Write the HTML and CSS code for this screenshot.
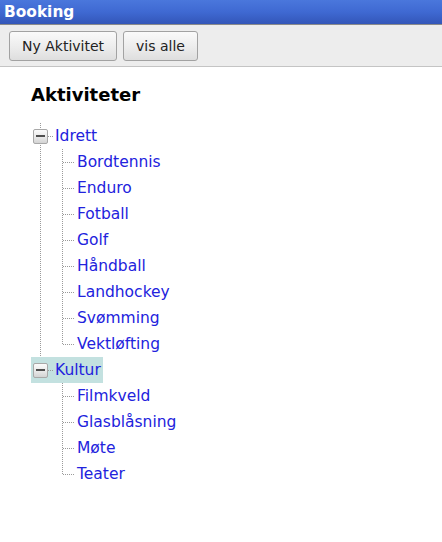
FILE: index.html
```html
<!DOCTYPE html>
<html>
<head>
<meta charset="utf-8">
<title>Booking</title>
<link rel="stylesheet" href="styles.css">
</head>
<body>
<div class="titlebar">Booking</div>
<div class="toolbar">
  <button class="btn">Ny Aktivitet</button>
  <button class="btn">vis alle</button>
</div>
<main class="content">
  <h1 class="heading">Aktiviteter</h1>
  <ul class="tree">
    <li class="branch">
      <div class="node-row"><span class="toggle"><span class="minus"></span></span><a class="label">Idrett</a></div>
      <ul class="children">
        <li class="leaf"><a class="label">Bordtennis</a></li>
        <li class="leaf"><a class="label">Enduro</a></li>
        <li class="leaf"><a class="label">Fotball</a></li>
        <li class="leaf"><a class="label">Golf</a></li>
        <li class="leaf"><a class="label">Håndball</a></li>
        <li class="leaf"><a class="label">Landhockey</a></li>
        <li class="leaf"><a class="label">Svømming</a></li>
        <li class="leaf"><a class="label">Vektløfting</a></li>
      </ul>
    </li>
    <li class="branch">
      <div class="node-row selected"><span class="toggle"><span class="minus"></span></span><a class="label">Kultur</a></div>
      <ul class="children">
        <li class="leaf"><a class="label">Filmkveld</a></li>
        <li class="leaf"><a class="label">Glasblåsning</a></li>
        <li class="leaf"><a class="label">Møte</a></li>
        <li class="leaf"><a class="label">Teater</a></li>
      </ul>
    </li>
  </ul>
</main>
</body>
</html>
```
FILE: styles.css
```css
html, body {
  margin: 0;
  padding: 0;
  background: #ffffff;
  font-family: "DejaVu Sans", Verdana, sans-serif;
}

.titlebar {
  height: 24px;
  line-height: 24px;
  padding-left: 4px;
  color: #ffffff;
  font-weight: bold;
  font-size: 15.4px;
  background: linear-gradient(to bottom, #4a77dc 0%, #3f69d2 50%, #3356b8 100%);
  border-bottom: 1px solid #8a8a8a;
}

.toolbar {
  display: flex;
  gap: 6px;
  padding: 6px 9px 5px 9px;
  background: #ededed;
  border-bottom: 1px solid #c4c4c4;
}

.btn {
  height: 30px;
  padding: 0 12px 0 12px;
  font-family: "DejaVu Sans", Verdana, sans-serif;
  font-size: 14px;
  color: #222222;
  background: linear-gradient(to bottom, #fafafa 0%, #ececec 55%, #dedede 100%);
  border: 1px solid #a2a2a2;
  border-radius: 3px;
}

.content {
  padding-left: 31px;
}

.heading {
  margin: 17px 0 17px 0;
  font-size: 18px;
  line-height: 22px;
  font-weight: bold;
  color: #000000;
}

.tree,
.children {
  list-style: none;
  margin: 0;
  padding: 0;
}

.tree {
  margin-left: 2px;
  font-size: 15.5px;
}

.branch {
  background: repeating-linear-gradient(to bottom, #9a9a9a 0 1px, transparent 1px 2px) 7px 0 / 1px 100% no-repeat;
}

.branch:last-child {
  background-size: 1px 13px;
}

.node-row {
  display: inline-flex;
  align-items: center;
  height: 26px;
  margin-left: -2px;
  padding: 0 2px;
  background: repeating-linear-gradient(to right, #9a9a9a 0 1px, transparent 1px 2px) 17px 13px / 6px 1px no-repeat;
}

.node-row.selected {
  background-color: #c3e1e0;
}

.toggle {
  width: 13px;
  height: 13px;
  border: 1px solid #a8a8a8;
  border-radius: 2px;
  background: linear-gradient(to bottom, #fbfbfb 0%, #e6e6e6 60%, #d4d4d4 100%);
  display: flex;
  align-items: center;
  justify-content: center;
  margin-right: 7px;
}

.minus {
  width: 9px;
  height: 2px;
  background: #4e4e4e;
}

.label {
  color: #2222dd;
  line-height: 26px;
  cursor: pointer;
}

.children {
  margin-left: 29px;
}

.leaf {
  display: flex;
  align-items: center;
  height: 26px;
  padding-left: 15px;
  background:
    repeating-linear-gradient(to right, #9a9a9a 0 1px, transparent 1px 2px) 1px 13px / 12px 1px no-repeat,
    repeating-linear-gradient(to bottom, #9a9a9a 0 1px, transparent 1px 2px) 0 0 / 1px 100% no-repeat;
}

.leaf:last-child {
  background-size: 12px 1px, 1px 14px;
}
```
